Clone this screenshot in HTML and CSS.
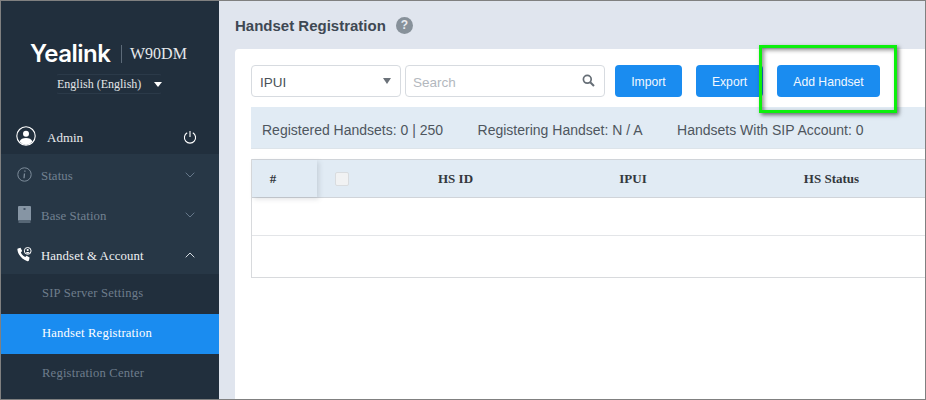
FILE: index.html
```html
<!DOCTYPE html>
<html lang="en">
<head>
<meta charset="utf-8">
<title>Handset Registration</title>
<link rel="stylesheet" href="styles.css">
</head>
<body>
<div class="frame">
  <aside class="sidebar">
    <div class="brand">
      <span class="logo">Yealink</span>
      <span class="brand-sep"></span>
      <span class="model">W90DM</span>
    </div>
    <div class="lang">
      <span>English (English)</span>
      <span class="lang-caret"></span>
    </div>
    <div class="user">
      <svg class="user-icon" viewBox="0 0 20 20" width="20" height="20"><circle cx="10" cy="10" r="9.2" fill="none" stroke="#fff" stroke-width="1.1"/><circle cx="10" cy="7.7" r="3" fill="#fff"/><path d="M3.6 15.6c.8-2.6 3.4-3.6 6.4-3.6s5.6 1 6.400 3.600A9 9 0 0 1 10 19a9 9 0 0 1-6.400-3.400z" fill="#fff"/></svg>
      <span class="user-name">Admin</span>
      <svg class="power" viewBox="0 0 14 14" width="14" height="14"><path d="M4.200 2.700a5.600 5.600 0 1 0 5.600 0" fill="none" stroke="#fff" stroke-width="1.100"/><path d="M7 1v6" stroke="#fff" stroke-width="1.100"/></svg>
    </div>
    <nav class="nav">
      <div class="nav-item">
        <svg class="nav-icon" viewBox="0 0 15 15" width="15" height="15"><circle cx="7.500" cy="7.500" r="6.700" fill="none" stroke="#7d8c9a" stroke-width="1"/><path d="M7.900 3.500v1.300M7.500 6.500 7 11.300" stroke="#7d8c9a" stroke-width="1.300" fill="none"/></svg>
        <span class="nav-label">Status</span>
        <svg class="chev" viewBox="0 0 10 6" width="10" height="6"><path d="M.7.700 5 5 9.300.700" fill="none" stroke="#66788a" stroke-width="1"/></svg>
      </div>
      <div class="nav-item">
        <svg class="nav-icon" viewBox="0 0 14 17" width="14" height="17"><path d="M1.500 0h11a1 1 0 0 1 1 1v13.500h-13V1a1 1 0 0 1 1-1z" fill="#8695a4"/><rect x="1" y="15.500" width="12" height="1" fill="#8695a4"/><rect x="6" y="2" width="2" height="2" fill="#47586a"/></svg>
        <span class="nav-label">Base Station</span>
        <svg class="chev" viewBox="0 0 10 6" width="10" height="6"><path d="M.7.700 5 5 9.300.700" fill="none" stroke="#66788a" stroke-width="1"/></svg>
      </div>
      <div class="nav-item nav-item-open">
        <svg class="nav-icon" viewBox="0 0 15 15" width="15" height="15"><path d="M1 1.500 3.500.800l1.700 3.300-1.400 1.300c.8 1.900 2.300 3.500 4.400 4.600l1.400-1.300 3 1.800-.6 2.800c-.2.700-.8 1-1.500.9C5.300 12.500.9 8 .4 2.600.3 2.100.5 1.700 1 1.500z" fill="#fff"/><circle cx="10.700" cy="3.900" r="3.400" fill="none" stroke="#fff" stroke-width="1"/><circle cx="10.700" cy="3" r="1.100" fill="#fff"/><path d="M8.700 5.800c.5-1 3.500-1 4 0l-2 .9z" fill="#fff"/></svg>
        <span class="nav-label">Handset &amp; Account</span>
        <svg class="chev" viewBox="0 0 10 6" width="10" height="6"><path d="M.7 5.300 5 1l4.300 4.300" fill="none" stroke="#d5dbe1" stroke-width="1"/></svg>
      </div>
      <div class="sub-item">SIP Server Settings</div>
      <div class="sub-item sub-item-active">Handset Registration</div>
      <div class="sub-item">Registration Center</div>
    </nav>
  </aside>
  <main class="main">
    <header class="page-head">
      <h1 class="page-title">Handset Registration</h1>
      <span class="help">?</span>
    </header>
    <section class="card">
      <div class="toolbar">
        <div class="select">
          <span>IPUI</span>
          <span class="select-caret"></span>
        </div>
        <div class="search">
          <span class="search-ph">Search</span>
          <svg viewBox="0 0 13 13" width="13" height="13"><circle cx="5.300" cy="5.300" r="3.900" fill="none" stroke="#666e76" stroke-width="1.700"/><path d="m8.200 8.200 3.800 3.800" stroke="#666e76" stroke-width="2"/></svg>
        </div>
        <button class="btn btn-import">Import</button>
        <button class="btn btn-export">Export</button>
        <button class="btn btn-add">Add Handset</button>
      </div>
      <div class="info-bar">
        <span>Registered Handsets: 0 | 250</span>
        <span>Registering Handset: N / A</span>
        <span>Handsets With SIP Account: 0</span>
      </div>
      <div class="table">
        <div class="row row-head">
          <div class="cell-num">#</div>
          <div class="cell-check"><span class="checkbox"></span></div>
          <div class="cell-id">HS ID</div>
          <div class="cell-ipui">IPUI</div>
          <div class="cell-status">HS Status</div>
        </div>
        <div class="row row-body"></div>
        <div class="row row-body row-last"></div>
      </div>
    </section>
  </main>
  <div class="highlight"></div>
</div>
</body>
</html>
```
FILE: styles.css
```css
* { box-sizing: border-box; }
html, body { margin: 0; padding: 0; }
body { width: 926px; height: 400px; overflow: hidden; background: #fff; }

.frame {
  position: relative;
  width: 926px;
  height: 400px;
  display: flex;
  border: 1px solid #808080;
  overflow: hidden;
  font-family: "Liberation Sans", Arial, sans-serif;
}

/* Sidebar */
.sidebar {
  width: 218px;
  flex: none;
  background: #212f3d;
  display: flex;
  flex-direction: column;
  font-family: "Liberation Serif", "Times New Roman", serif;
}
.brand {
  margin-top: 40px;
  display: flex;
  align-items: center;
  padding-left: 29px;
  height: 24px;
}
.logo {
  font-family: "Inter", "Open Sans", sans-serif;
  font-weight: 600;
  font-size: 24px;
  letter-spacing: -0.500px;
  color: #fff;
  width: 82px;
}
.brand-sep { width: 1px; height: 18px; background: #5c6a78; margin-left: 9px; margin-top: 2px; }
.model { font-size: 16px; color: #e6e9ec; margin-left: 8px; margin-top: 2px; }
.lang {
  align-self: flex-start;
  margin: 9px 0 0 55px;
  width: 106px;
  height: 20px;
  border: 1px solid #2b3a49;
  border-left-color: transparent;
  border-right-color: transparent;
  border-radius: 3px;
  display: flex;
  align-items: center;
  justify-content: space-between;
  color: #e3e6e9;
  font-size: 12px;
  white-space: nowrap;
}
.lang-caret {
  width: 0; height: 0;
  border-left: 4px solid transparent;
  border-right: 4px solid transparent;
  border-top: 5px solid #fff;
  margin-right: -1px;
}
.user {
  margin-top: 27px;
  margin-bottom: 4px;
  height: 29px;
  display: flex;
  align-items: center;
  padding: 0 22px 0 15px;
  color: #e8eaec;
  font-size: 13px;
}
.user-name { margin-left: 11px; flex: 1; margin-top: 4px; }
.power { margin-top: 3px; }

.nav { display: flex; flex-direction: column; }
.nav-item {
  height: 40px;
  background: #273746;
  display: flex;
  align-items: center;
  padding-left: 16px;
  padding-right: 24px;
  color: #728191;
  font-size: 12.800px;
  letter-spacing: 0.100px;
}
.nav-icon { width: 15px; flex: none; }
.nav-label { margin-left: 9px; flex: 1; white-space: nowrap; margin-top: 4px; }
.nav-item-open { color: #eef0f2; }
.chev { flex: none; margin-top: 1px; }
.sub-item {
  height: 40px;
  display: flex;
  align-items: center;
  padding-left: 41px;
  padding-bottom: 2px;
  color: #6e7d8c;
  font-size: 12.600px;
  letter-spacing: 0.200px;
  background: #212f3d;
  white-space: nowrap;
}
.sub-item-active { background: #1a8cf0; color: #fff; }

/* Main */
.main {
  flex: 1;
  min-width: 0;
  background: #e0e5ee;
  padding-left: 16px;
  display: flex;
  flex-direction: column;
}
.page-head {
  height: 48px;
  display: flex;
  align-items: center;
}
.page-title {
  margin: 0;
  font-size: 15px;
  font-weight: 700;
  color: #3e4853;
}
.help {
  margin-left: 10px;
  width: 17px;
  height: 17px;
  border-radius: 50%;
  background: #87919a;
  color: #e8ebef;
  font-size: 12px;
  font-weight: 700;
  display: flex;
  align-items: center;
  justify-content: center;
}
.card {
  flex: 1;
  background: #fff;
  border-radius: 4px 0 0 0;
  padding: 16px 0 0 16px;
}
.toolbar {
  display: flex;
  height: 32px;
  align-items: stretch;
}
.select {
  width: 150px;
  border: 1px solid #d7dbe0;
  border-radius: 4px;
  display: flex;
  align-items: center;
  justify-content: space-between;
  padding: 2px 9px 0 8px;
  font-size: 13.500px;
  color: #4a5158;
}
.select-caret {
  width: 0; height: 0;
  border-left: 4.500px solid transparent;
  border-right: 4.500px solid transparent;
  border-top: 6px solid #6b7279;
  margin-top: -3px;
}
.search {
  width: 200px;
  margin-left: 4px;
  border: 1px solid #d7dbe0;
  border-radius: 4px;
  display: flex;
  align-items: center;
  justify-content: space-between;
  padding: 2px 9px 0 7px;
  font-size: 13.500px;
}
.search svg { margin-top: -3px; }
.search-ph { color: #b3b8be; }
.btn {
  border: 0;
  border-radius: 4px;
  background: #1a8cf0;
  color: #f2f8fe;
  font-family: inherit;
  font-size: 12.200px;
  padding: 2px 0 0;
  height: 32px;
}
.btn-import { width: 67px; margin-left: 10px; }
.btn-export { width: 67px; margin-left: 14px; }
.btn-add { width: 103px; margin-left: 14px; }
.info-bar {
  margin-top: 10px;
  height: 42px;
  background: #e1ebf4;
  border-bottom: 1px solid #dde4ea;
  display: flex;
  align-items: center;
  padding: 5px 0 0 11px;
  gap: 34.500px;
  font-size: 14px;
  color: #4e565e;
  white-space: nowrap;
}
.table { margin-top: 10px; border-left: 1px solid #d8dadd; }
.row { display: flex; align-items: stretch; }
.row-head {
  height: 39px;
  background: #e1ebf4;
  border-top: 1px solid #d0d4d9;
  border-bottom: 1px solid #d0d4d9;
  font-family: "Liberation Serif", "Times New Roman", serif;
  font-weight: 700;
  font-size: 13px;
  color: #33383d;
}
.row-head > div { display: flex; align-items: center; justify-content: center; }
.cell-num { width: 65px; box-shadow: 2px 2px 5px rgba(80, 90, 100, 0.18); padding-right: 23px; }
.cell-check { width: 72px; justify-content: flex-start !important; padding-left: 18px; }
.checkbox {
  width: 14px; height: 14px; flex: none;
  background: #f1f2f3;
  border: 1px solid #d9dcdf;
  border-radius: 2px;
}
.cell-id { width: 132px; justify-content: flex-start !important; padding-left: 49px; }
.cell-ipui { width: 178px; padding-left: 46px; }
.cell-status { width: 199px; padding-left: 66px; }
.row-body { height: 38px; border-bottom: 1px solid #e3e5e8; }
.row-last { height: 42px; border-bottom: 1px solid #d8dadd; }

/* Annotation drawn over the screenshot */
.highlight {
  position: absolute;
  left: 758px;
  top: 44px;
  width: 138px;
  height: 68px;
  border: 3.500px solid #0cf00c;
  box-shadow: 2px 2px 4px rgba(0, 0, 0, 0.55), inset 2px 2px 4px rgba(0, 0, 0, 0.45);
  pointer-events: none;
}
```
